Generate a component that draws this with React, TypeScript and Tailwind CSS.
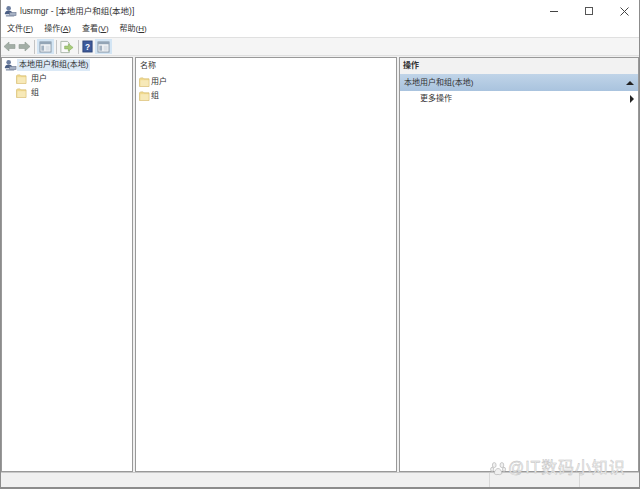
import React from 'react';

const cjk = { fontFamily: '"Liberation Sans", "Noto Sans CJK SC", sans-serif' };

const FolderIcon = () => (
  <svg width="11" height="10" viewBox="0 0 12 11" className="shrink-0">
    <path d="M0.5 2 L1.5 1 H4.5 L5.5 2 H11 V10.5 H0.5 Z" fill="#f0d98e" stroke="#d8bf78" strokeWidth="0.8" />
    <rect x="1.5" y="3.5" width="9" height="6.5" fill="#f7e9b8" />
  </svg>
);

const ComputerIcon = () => (
  <svg width="13" height="12" viewBox="0 0 14 13" className="shrink-0">
    <circle cx="5" cy="3.5" r="2.5" fill="#6c7ea0" />
    <path d="M1 9 Q1.5 6 5 6 Q8.5 6 9 9 V10 H1 Z" fill="#4a5e84" />
    <rect x="6" y="8" width="7" height="3.5" fill="#a6b1c4" stroke="#66728a" strokeWidth="0.6" />
    <rect x="2" y="11" width="9" height="1.5" fill="#8a96ac" />
  </svg>
);

const ToolbarSep = () => <div className="h-[14px] w-px bg-[#c4c4c4]" />;

const Arrow = ({ flip }: { flip?: boolean }) => (
  <svg width="13" height="11" viewBox="0 0 13 11" className={flip ? 'rotate-180' : ''}>
    <path d="M1 5.5 L6 1 V3.5 H12 V7.5 H6 V10 Z" fill="#a3aea6" stroke="#8f9a92" strokeWidth="0.6" />
  </svg>
);

const PaneIcon = () => (
  <svg width="13" height="12" viewBox="0 0 14 13">
    <rect x="1" y="1" width="12" height="11" fill="#f4f6f8" stroke="#8494a4" />
    <rect x="1" y="1" width="12" height="2.5" fill="#93a5b6" />
    <rect x="2.5" y="5" width="3" height="5.5" fill="#a2b1c0" />
    <rect x="7" y="5" width="4.5" height="5.5" fill="#dbe1e7" />
  </svg>
);

const MenuItem = ({ label, hotkey }: { label: string; hotkey: string }) => (
  <span>
    {label}(<span className="underline">{hotkey}</span>)
  </span>
);

const menus = [
  { label: '文件', hotkey: 'F' },
  { label: '操作', hotkey: 'A' },
  { label: '查看', hotkey: 'V' },
  { label: '帮助', hotkey: 'H' },
];

export default function App() {
  return (
    <div className="relative flex h-[489px] w-[640px] flex-col overflow-hidden border-x border-b-2 border-x-[#8c8c8c] border-b-[#8c8c8c] bg-[#f0f0f0] text-[#333]" style={cjk}>
      <div className="flex h-[21px] shrink-0 items-center bg-white pl-[3px] pt-px">
        <ComputerIcon />
        <span className="ml-[3px] pt-px text-[8.5px]">lusrmgr - [本地用户和组(本地)]</span>
        <div className="ml-auto flex items-center gap-[27px] pr-[10px]">
          <div className="h-px w-[8px] bg-[#444]" />
          <div className="h-[8px] w-[8px] border border-[#555]" />
          <svg width="9" height="9" viewBox="0 0 9 9"><path d="M0.5 0.5 L8.5 8.5 M8.5 0.5 L0.5 8.5" stroke="#444" strokeWidth="1" /></svg>
        </div>
      </div>

      <div className="flex h-[16px] shrink-0 items-center gap-[11px] bg-white pl-[6px] text-[8px]">
        {menus.map((m) => (
          <MenuItem key={m.label} label={m.label} hotkey={m.hotkey} />
        ))}
      </div>

      <div className="flex h-[19px] shrink-0 items-center border-y border-[#e0e0e0] bg-[#f5f5f5] pl-[2px]">
        <Arrow />
        <div className="w-[2px]" />
        <Arrow flip />
        <div className="w-[3px]" />
        <ToolbarSep />
        <div className="ml-[2px] flex h-[15px] w-[17px] items-center justify-center bg-[#d3e5f4]"><PaneIcon /></div>
        <div className="w-[2px]" />
        <ToolbarSep />
        <svg width="15" height="14" viewBox="0 0 16 14" className="ml-[2px]">
          <path d="M2 1 H9 L11 3 V13 H2 Z" fill="#fafafa" stroke="#a8b4a8" />
          <path d="M6 6 H10 V3.5 L15 7.5 L10 11.5 V9 H6 Z" fill="#a9cc7c" stroke="#83ab5a" strokeWidth="0.6" />
        </svg>
        <div className="w-[4px]" />
        <ToolbarSep />
        <svg width="11" height="13" viewBox="0 0 12 14" className="ml-[3px]">
          <rect x="1" y="1" width="10" height="12" fill="#3d5a9a" stroke="#2c4478" />
          <text x="6" y="10.5" fontSize="9" fontWeight="700" fill="#fff" textAnchor="middle">?</text>
        </svg>
        <div className="ml-[2px] flex h-[15px] w-[17px] items-center justify-center bg-[#d3e5f4]"><PaneIcon /></div>
      </div>

      <div className="flex min-h-0 flex-1 gap-[2px] pt-px">
        <div className="w-[132px] shrink-0 border border-[#999] bg-white text-[8px]">
          <div className="flex h-[14px] items-center pl-[2px]">
            <ComputerIcon />
            <span className="bg-[#dbe9f6] px-[2px] leading-[12px]">本地用户和组(本地)</span>
          </div>
          <div className="flex h-[14px] items-center gap-[4px] pl-[14px]">
            <FolderIcon />
            <span>用户</span>
          </div>
          <div className="flex h-[14px] items-center gap-[4px] pl-[14px]">
            <FolderIcon />
            <span>组</span>
          </div>
        </div>

        <div className="w-[262px] shrink-0 border border-[#999] bg-white text-[8px]">
          <div className="flex h-[16px] items-center pl-[4px]">名称</div>
          <div className="flex h-[15px] items-center gap-px pl-[3px]">
            <FolderIcon />
            <span>用户</span>
          </div>
          <div className="flex h-[14px] items-center gap-px pl-[3px]">
            <FolderIcon />
            <span>组</span>
          </div>
        </div>

        <div className="min-w-0 flex-1 border border-[#999] bg-white text-[8px]">
          <div className="flex h-[16px] items-center bg-[#f2f2f2] pl-[3px] font-bold">操作</div>
          <div className="flex h-[17px] items-center justify-between bg-gradient-to-b from-[#c0d4e8] to-[#a9c3de] pl-[4px] pr-[4px]">
            <span>本地用户和组(本地)</span>
            <div className="h-0 w-0 border-x-[4px] border-b-[4px] border-x-transparent border-b-[#222]" />
          </div>
          <div className="flex h-[16px] items-center justify-between pl-[20px] pr-[4px]">
            <span>更多操作</span>
            <div className="h-0 w-0 border-y-[4px] border-l-[4px] border-y-transparent border-l-[#222]" />
          </div>
        </div>
      </div>

      <div className="flex h-[15px] shrink-0 border-t border-[#c8c8c8] bg-[#f0f0f0]">
        <div className="w-[489px] border-r border-[#d8d8d8]" />
        <div className="w-[90px] border-r border-[#d8d8d8]" />
      </div>

      <div className="absolute left-[489px] top-[456px] flex items-center text-[16px] tracking-[0.9px] text-[#efefef]" style={{ WebkitTextStroke: '0.4px #bcbcbc' }}>
        <svg width="17" height="17" viewBox="0 0 20 18" className="mr-px">
          <g fill="#efefef" stroke="#bbb" strokeWidth="0.9">
            <ellipse cx="5" cy="5" rx="2.2" ry="3" />
            <ellipse cx="14" cy="5" rx="2.2" ry="3" />
            <ellipse cx="2.5" cy="10" rx="1.8" ry="2.4" />
            <ellipse cx="16.5" cy="10" rx="1.8" ry="2.4" />
            <path d="M5 15 Q6 9 9.5 9 Q13 9 14 15 Q11 17 9.5 16 Q7 17 5 15 Z" />
          </g>
        </svg>
        <span>@IT数码小知识</span>
      </div>
    </div>
  );
}
